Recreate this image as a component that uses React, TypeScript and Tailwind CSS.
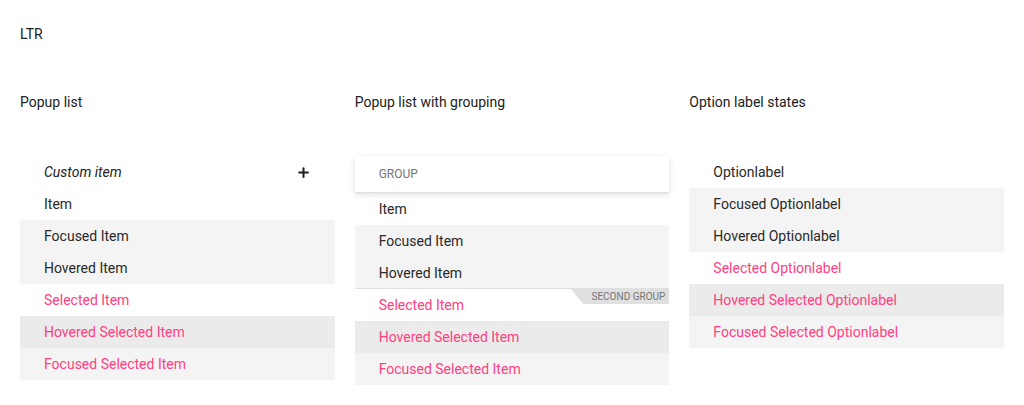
import { Plus } from 'lucide-react'

type Row = { label: string; kind: 'plain' | 'focused' | 'hovered' | 'selected' | 'hovSel' | 'focSel' }

const rowClass: Record<Row['kind'], string> = {
  plain: 'bg-white text-[#292929]',
  focused: 'bg-[#f4f4f4] text-[#292929]',
  hovered: 'bg-[#f4f4f4] text-[#292929]',
  selected: 'bg-white text-[#ff4081]',
  hovSel: 'bg-[#ebebeb] text-[#ff4081]',
  focSel: 'bg-[#f4f4f4] text-[#ff4081]',
}

function Item({ row }: { row: Row }) {
  return <div className={`h-8 flex items-center pl-6 pr-6 text-sm ${rowClass[row.kind]}`}>{row.label}</div>
}

const items: Row[] = [
  { label: 'Item', kind: 'plain' },
  { label: 'Focused Item', kind: 'focused' },
  { label: 'Hovered Item', kind: 'hovered' },
  { label: 'Selected Item', kind: 'selected' },
  { label: 'Hovered Selected Item', kind: 'hovSel' },
  { label: 'Focused Selected Item', kind: 'focSel' },
]

const options: Row[] = [
  { label: 'Optionlabel', kind: 'plain' },
  { label: 'Focused Optionlabel', kind: 'focused' },
  { label: 'Hovered Optionlabel', kind: 'hovered' },
  { label: 'Selected Optionlabel', kind: 'selected' },
  { label: 'Hovered Selected Optionlabel', kind: 'hovSel' },
  { label: 'Focused Selected Optionlabel', kind: 'focSel' },
]

export default function App() {
  return (
    <div className="bg-white min-h-[405px] px-5 pt-6 text-[#212121]" style={{ fontFamily: 'Roboto, sans-serif' }}>
      <div className="text-sm leading-5">LTR</div>
      <div className="grid grid-cols-3 gap-5 mt-12">
        <div>
          <div className="text-sm leading-5">Popup list</div>
          <div className="mt-11">
            <div className="h-8 flex items-center justify-between pl-6 pr-6 text-sm italic text-[#212121]">
              <span>Custom item</span>
              <Plus size={15} strokeWidth={3.2} className="text-[#212121]" />
            </div>
            {items.map((r) => (
              <Item key={r.label} row={r} />
            ))}
          </div>
        </div>
        <div>
          <div className="text-sm leading-5">Popup list with grouping</div>
          <div className="mt-11">
            <div className="h-[37px] flex items-center pl-6 text-xs uppercase text-[#757575] bg-white border-b border-[#e0e0e0] shadow-[0_2px_6px_rgba(0,0,0,0.12)] relative z-10">
              Group
            </div>
            {items.slice(0, 3).map((r) => (
              <Item key={r.label} row={r} />
            ))}
            <div className="relative -mt-px border-t border-[#e0e0e0]">
              <div className="absolute right-0 top-0 z-10 flex h-[15px] items-center">
                <svg width="12" height="15" viewBox="0 0 12 15" className="block">
                  <polygon points="0,0 12,0 12,15" fill="#e0e0e0" />
                </svg>
                <div className="h-[15px] bg-[#e0e0e0] pl-2 pr-1 text-[10px] leading-[15px] uppercase text-[#757575]">
                  Second group
                </div>
              </div>
              {items.slice(3).map((r) => (
                <Item key={r.label} row={r} />
              ))}
            </div>
          </div>
        </div>
        <div>
          <div className="text-sm leading-5">Option label states</div>
          <div className="mt-11">
            {options.map((r) => (
              <Item key={r.label} row={r} />
            ))}
          </div>
        </div>
      </div>
    </div>
  )
}
